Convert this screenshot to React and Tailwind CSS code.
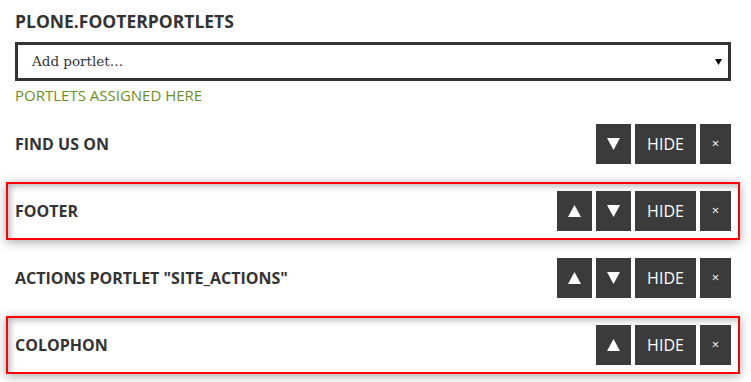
const rows = [
    { title: "FIND US ON", up: false, down: true, marked: false },
    { title: "FOOTER", up: true, down: true, marked: true },
    { title: 'ACTIONS PORTLET "SITE_ACTIONS"', up: true, down: true, marked: false },
    { title: "COLOPHON", up: true, down: false, marked: true },
];

const Up = () => (
    <svg width="13" height="12" viewBox="0 0 13 12">
        <polygon points="6.5,0 13,12 0,12" fill="#fff" />
    </svg>
);

const Down = () => (
    <svg width="13" height="12" viewBox="0 0 13 12">
        <polygon points="0,0 13,0 6.5,12" fill="#fff" />
    </svg>
);

const btn = "h-10 flex items-center justify-center bg-[#3b3b3b] text-white";

const Row = ({ title, up, down, marked }) => (
    <div
        className={
            "-mx-[9px] h-[58px] border-2 pl-[7px] pr-[7px] flex items-center justify-between " +
            (marked
                ? "border-[#ff0000] shadow-[0_2px_10px_rgba(0,0,0,0.35),inset_5px_5px_7px_-3px_rgba(0,0,0,0.3)]"
                : "border-transparent")
        }
    >
        <span className="text-[16px] font-bold text-[#333]">{title}</span>
        <div className="flex gap-1">
            {up && (
                <div className={btn + " w-[35px]"}>
                    <Up />
                </div>
            )}
            {down && (
                <div className={btn + " w-[35px]"}>
                    <Down />
                </div>
            )}
            <div className={btn + " w-[61px] text-[16px]"}>HIDE</div>
            <div className={btn + " w-[31px] text-[13px] text-[#ddd]"}>×</div>
        </div>
    </div>
);

export default function App() {
    return (
        <div className="w-[751px] h-[382px] bg-white overflow-hidden pl-[15px] pr-[20px] pt-[10px] font-['Open_Sans',sans-serif]">
            <h2 className="text-[17.5px] leading-[22px] font-bold text-[#333]">PLONE.FOOTERPORTLETS</h2>
            <div className="mt-[10px] h-[39px] border-[3px] border-[#333] flex items-center justify-between pl-[14px] pr-[6px]">
                <span className="font-['DejaVu_Serif',serif] text-[13.5px] text-[#333]">Add portlet…</span>
                <svg width="7" height="6" viewBox="0 0 7 6">
                    <polygon points="0,0 7,0 3.5,6" fill="#000" />
                </svg>
            </div>
            <div className="mt-[4px] text-[15px] leading-[20px] text-[#6a8f24]">PORTLETS ASSIGNED HERE</div>
            <div className="mt-[10px] flex flex-col gap-[9px]">
                {rows.map((r) => (
                    <Row key={r.title} {...r} />
                ))}
            </div>
        </div>
    );
}
